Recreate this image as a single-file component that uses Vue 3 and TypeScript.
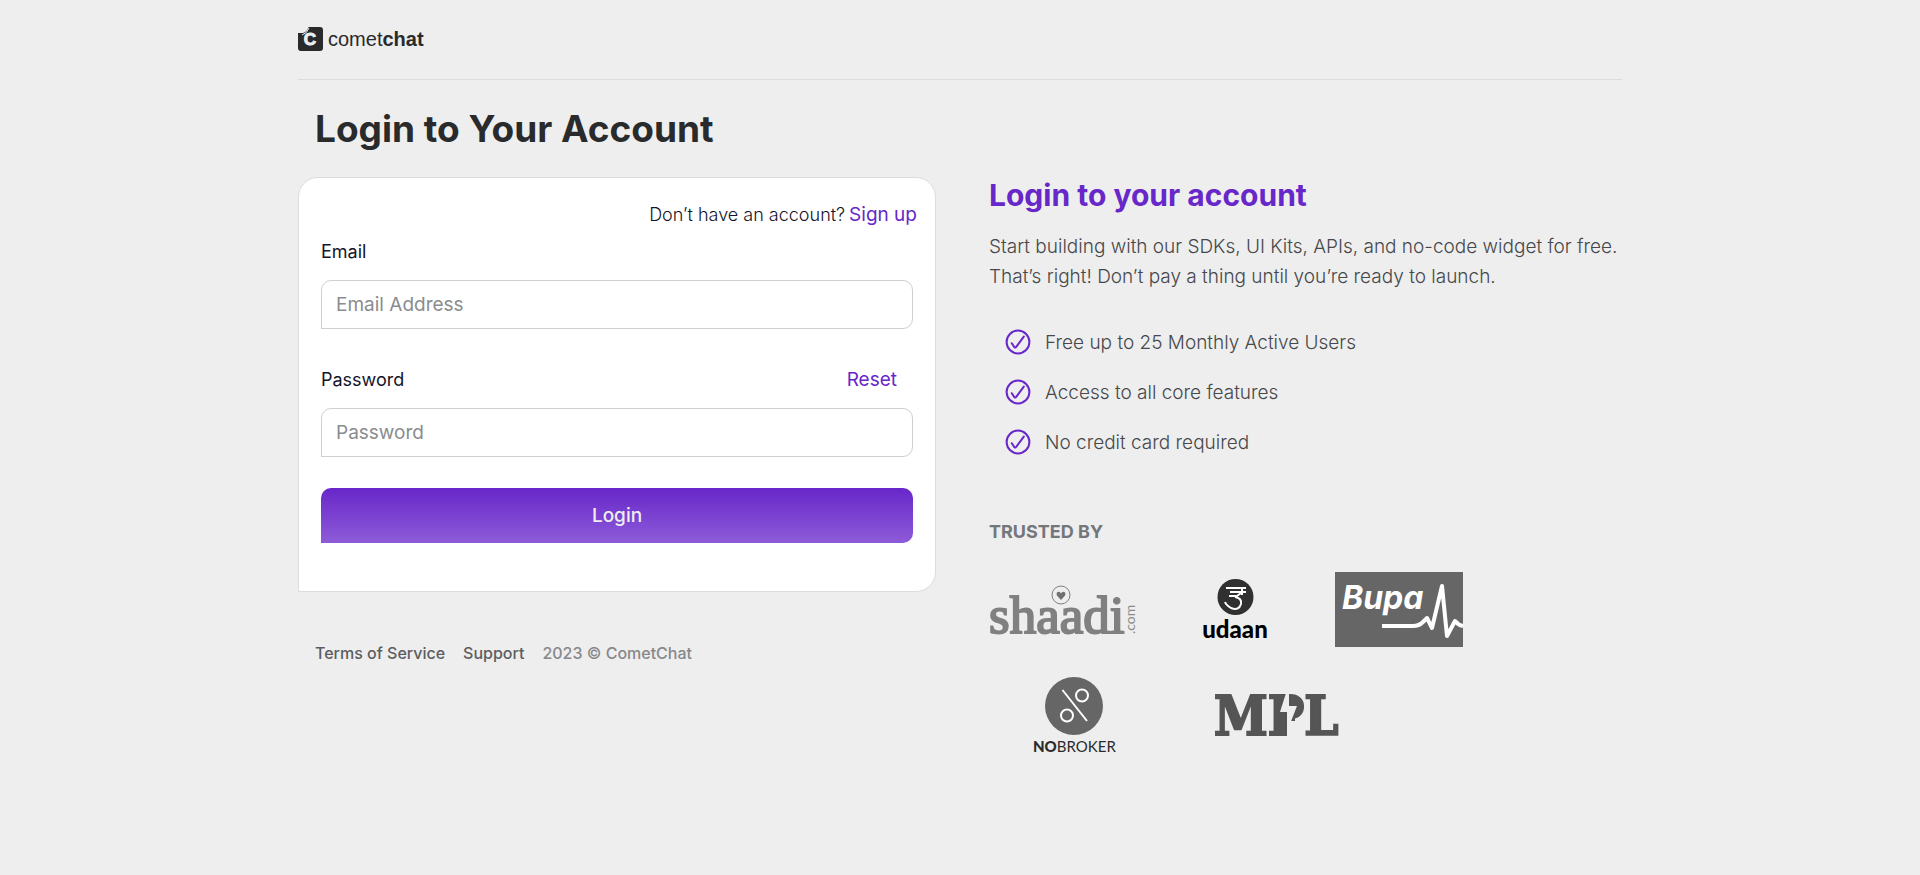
<script setup lang="ts">
import { ref } from 'vue'

const email = ref('')
const password = ref('')

const features: string[] = [
  'Free up to 25 Monthly Active Users',
  'Access to all core features',
  'No credit card required',
]
</script>

<template>
  <div class="page">
    <header class="header">
      <a class="brand" href="#" aria-label="cometchat">
        <svg class="brand-mark" viewBox="0 0 25 24" aria-hidden="true">
          <path fill="#282a2c" d="M0 6H5Q9 5 10.500 0H22Q25 0 25 3V21Q25 24 22 24H3Q0 24 0 21Z" />
          <path d="M4 8Q9 6.500 11 1" fill="none" stroke="#eee" stroke-width="1" />
          <text x="12" y="18" text-anchor="middle" fill="#eee" stroke="#eee" stroke-width="1" font-family="Liberation Sans, sans-serif" font-size="17" font-weight="700">C</text>
        </svg>
        <span class="brand-name">comet<b>chat</b></span>
      </a>
    </header>

    <h1 class="title">Login to Your Account</h1>

    <main class="columns">
      <section class="left">
        <form class="card" @submit.prevent>
          <p class="signup">Don’t have an account? <a href="#">Sign up</a></p>

          <div class="label-row">
            <label for="email">Email</label>
          </div>
          <input id="email" v-model="email" class="field" type="email" placeholder="Email Address" />

          <div class="label-row second">
            <label for="password">Password</label>
            <a class="reset" href="#">Reset</a>
          </div>
          <input id="password" v-model="password" class="field" type="password" placeholder="Password" />

          <button class="submit" type="submit">Login</button>
        </form>

        <footer class="footer">
          <a href="#">Terms of Service</a>
          <a href="#">Support</a>
          <span>2023 © CometChat</span>
        </footer>
      </section>

      <section class="right">
        <h2>Login to your account</h2>
        <p class="intro">
          Start building with our SDKs, UI Kits, APIs, and no-code widget for free. That’s right! Don’t pay a thing
          until you’re ready to launch.
        </p>
        <ul class="features">
          <li v-for="feature in features" :key="feature">
            <svg class="check" viewBox="0 0 26 26" fill="none" stroke="#6827c9" stroke-width="2" stroke-linecap="round" stroke-linejoin="round" aria-hidden="true">
              <circle cx="13" cy="13" r="11.4" />
              <path d="M6.8 14.2 9.4 18.2Q10.2 19 11.2 17.8L18.8 7.6" />
            </svg>
            {{ feature }}
          </li>
        </ul>

        <h3>TRUSTED BY</h3>
        <div class="logos">
          <svg class="shaadi" viewBox="0 0 147 50" role="img" aria-label="shaadi.com">
            <text x="0" y="48" fill="#808080" stroke="#808080" stroke-width="2" font-family="Liberation Serif, serif" font-size="53">shaadi</text>
            <circle cx="72" cy="10" r="9" fill="#eee" stroke="#808080" stroke-width="1" />
            <path fill="#707070" d="M72 15 67.9 10.5Q66.8 7 69.8 6.8 71.3 6.8 72 8.5 72.7 6.8 74.2 6.8 77.2 7 76.1 10.5Z" />
            <text transform="translate(146 49) rotate(-90)" fill="#8c8c8c" font-family="Lato, sans-serif" font-size="14">.com</text>
          </svg>
          <svg class="udaan" viewBox="0 0 63 62" role="img" aria-label="udaan">
            <circle cx="31.500" cy="18" r="18" fill="#303030" />
            <g fill="none" stroke="#fff" stroke-width="2">
              <path d="M22 9H42M26 13H42M38 8V16" />
              <path d="M25 17H33L37 14" />
              <path d="M31 18Q38 19 37 25 35 32 27 29 22 26 21 23" />
            </g>
            <text x="31" y="59" text-anchor="middle" fill="#000" font-family="Lato, sans-serif" font-size="24" font-weight="900">udaan</text>
          </svg>
          <svg class="bupa" viewBox="0 0 128 75" role="img" aria-label="Bupa">
            <rect width="128" height="75" fill="#666" />
            <text x="7" y="37" fill="#fff" font-family="Inter, sans-serif" font-size="32" font-weight="700" font-style="italic">Bupa</text>
            <path d="M47 54H78Q84 54 88 50L92 46 97 56 107 14 112 64 120 49Q123 53 128 54" fill="none" stroke="#fff" stroke-width="4" stroke-linejoin="round" />
          </svg>
        </div>
        <div class="logos lower">
          <svg class="nobroker" viewBox="0 0 82 76" role="img" aria-label="NoBroker">
            <circle cx="41" cy="29" r="29" fill="#666" />
            <g fill="none" stroke="#fff" stroke-width="2">
              <path d="M29.500 13 54 44" />
              <circle cx="49" cy="18.500" r="6" />
              <circle cx="34" cy="38.500" r="6" />
            </g>
            <text x="0" y="75" fill="#2b2b2b" font-family="Lato, sans-serif" font-size="15"><tspan font-weight="900">NO</tspan>BROKER</text>
          </svg>
          <svg class="mpl" viewBox="0 0 125 41" role="img" aria-label="MPL">
            <text x="-1" y="40" fill="#555" stroke="#555" stroke-width="2" font-family="DejaVu Serif Condensed, DejaVu Serif, serif" font-size="54" font-weight="700">MPL</text>
            <path d="M59 0H80V26H72V41H59Z" fill="#555" />
            <path d="M71 -2 65 17H72V42H82L75 29 82 11H74V-2Z" fill="#eee" />
          </svg>
        </div>
      </section>
    </main>
  </div>
</template>

<style>
body {
  background: #eee;
}
</style>

<style scoped>
.page {
  box-sizing: border-box;
  max-width: 1324px;
  margin: 0 auto;
  font-family: Inter, "Liberation Sans", sans-serif;
  color: #282a2c;
}

.page * {
  box-sizing: border-box;
}

svg {
  overflow: visible;
}

a {
  color: #6827c9;
  text-decoration: none;
}

.header {
  height: 80px;
  padding-top: 27px;
  border-bottom: 1px solid #dcdcdc;
}

.brand {
  display: inline-flex;
  align-items: center;
  gap: 5px;
  color: #282a2c;
}

.brand-mark {
  width: 25px;
  height: 24px;
}

.brand-name {
  font: 20px/24px "Liberation Sans", sans-serif;
}

.title {
  margin: 25px 0 24px;
  padding-left: 17px;
  font-size: 37px;
  font-weight: 700;
  line-height: 48px;
}

.columns {
  display: grid;
  grid-template-columns: 638fr 633fr;
  column-gap: 53px;
}

.card {
  padding: 22px 22px 48px;
  border: 1px solid #dcdcdc;
  border-radius: 20px 20px 20px 0;
  background: #fff;
}

.signup {
  display: flex;
  justify-content: flex-end;
  align-items: baseline;
  gap: 4px;
  margin: 0 -4px 10px 0;
  font-size: 18px;
  font-weight: 300;
  line-height: 30px;
  color: #141428;
}

.signup a,
.reset {
  font-size: 19px;
  font-weight: 400;
}

.label-row {
  display: flex;
  justify-content: space-between;
  margin-bottom: 16px;
  font-size: 18px;
  line-height: 24px;
  color: #141428;
}

.second {
  margin-top: 39px;
}

.reset {
  margin-right: 16px;
}

.field {
  display: block;
  width: 100%;
  height: 49px;
  padding: 0 14px;
  border: 1px solid #cfcfcf;
  border-radius: 10px 10px 10px 0;
  background: #fff;
  font: 19px/24px Inter, sans-serif;
  color: #141428;
}

.field::placeholder {
  color: #8a8c8e;
  opacity: 1;
}

.submit {
  display: block;
  width: 100%;
  height: 55px;
  margin-top: 31px;
  border: 0;
  border-radius: 10px 10px 10px 0;
  background: linear-gradient(#6827c9, #8d5bd8);
  font: 500 19px/24px Inter, sans-serif;
  color: #eee;
}

.footer {
  display: flex;
  gap: 18px;
  margin-top: 49px;
  padding-left: 17px;
  font-size: 16px;
  font-weight: 500;
  line-height: 24px;
  color: #86888a;
}

.footer a {
  color: #5b5d60;
}

h2 {
  margin: 0;
  font-size: 30px;
  font-weight: 700;
  line-height: 36px;
  color: #6827c9;
}

.intro {
  margin: 19px 0 25px;
  font-size: 19px;
  font-weight: 300;
  line-height: 30px;
  color: #46484b;
}

.features {
  margin: 0;
  padding: 0 0 0 16px;
  list-style: none;
  font-size: 19px;
  font-weight: 300;
  color: #46484b;
}

.features li {
  display: flex;
  align-items: center;
  gap: 14px;
  height: 50px;
}

.check {
  width: 26px;
  height: 26px;
}

h3 {
  margin: 53px 0 28px;
  font-size: 18px;
  font-weight: 700;
  line-height: 24px;
  color: #73767a;
}

.logos {
  display: flex;
  flex-wrap: wrap;
  align-items: center;
  gap: 30px 68px;
}

.lower {
  gap: 30px 100px;
  margin-top: 30px;
  padding-left: 44px;
}

.shaadi {
  width: 147px;
  height: 50px;
}

.udaan {
  width: 63px;
  height: 62px;
}

.bupa {
  width: 128px;
  height: 75px;
}

.nobroker {
  width: 82px;
  height: 76px;
}

.mpl {
  width: 125px;
  height: 41px;
}
</style>
